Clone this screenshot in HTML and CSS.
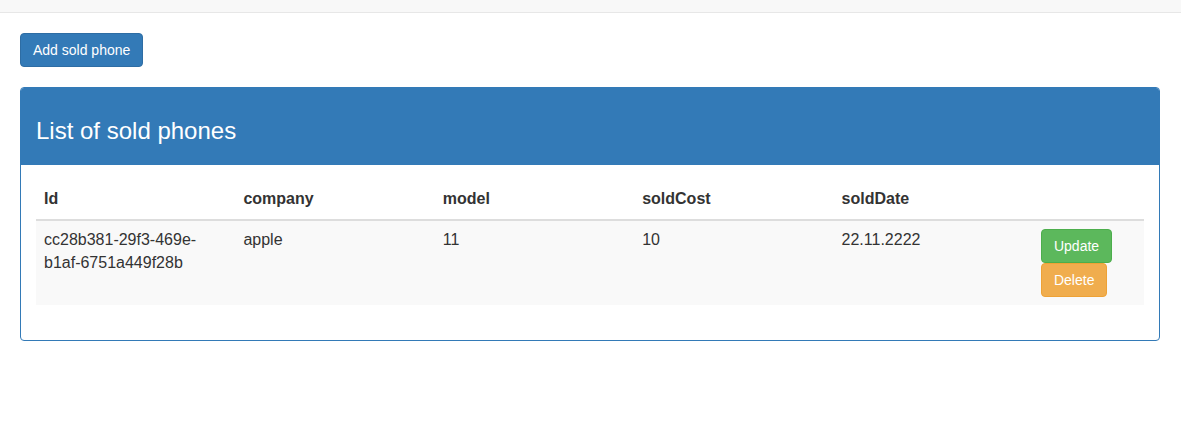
FILE: index.html
```html
<!DOCTYPE html>
<html>
<head>
<meta charset="utf-8">
<link rel="stylesheet" href="styles.css">
</head>
<body>
<nav class="navbar"></nav>
<main class="page">
  <button class="btn btn-primary">Add sold phone</button>
  <section class="panel">
    <div class="panel-heading">
      <h3>List of sold phones</h3>
    </div>
    <div class="panel-body">
      <table class="table">
        <colgroup>
          <col class="c-data"><col class="c-data"><col class="c-data"><col class="c-data"><col class="c-data"><col class="c-actions">
        </colgroup>
        <thead>
          <tr>
            <th>Id</th>
            <th>company</th>
            <th>model</th>
            <th>soldCost</th>
            <th>soldDate</th>
            <th></th>
          </tr>
        </thead>
        <tbody>
          <tr>
            <td>cc28b381-29f3-469e-b1af-6751a449f28b</td>
            <td>apple</td>
            <td>11</td>
            <td>10</td>
            <td>22.11.2222</td>
            <td>
              <div class="actions">
                <button class="btn btn-success">Update</button>
                <button class="btn btn-warning">Delete</button>
              </div>
            </td>
          </tr>
        </tbody>
      </table>
    </div>
  </section>
</main>
</body>
</html>
```
FILE: styles.css
```css
* { box-sizing: border-box; }
html, body { margin: 0; padding: 0; }
body {
  font-family: "Liberation Sans", Arial, Helvetica, sans-serif;
  font-size: 14px;
  line-height: 1.42857143;
  color: #333;
  background: #fff;
}
.navbar {
  height: 13px;
  background: #f8f8f8;
  border-bottom: 1px solid #e7e7e7;
}
.page {
  padding: 20px 21px 0 20px;
}
.btn {
  display: inline-block;
  padding: 6px 12px;
  font-family: inherit;
  font-size: 14px;
  line-height: 1.42857143;
  border: 1px solid transparent;
  border-radius: 4px;
  color: #fff;
  cursor: pointer;
  white-space: nowrap;
}
.btn-primary { background: #337ab7; border-color: #2e6da4; }
.btn-success { background: #5cb85c; border-color: #4cae4c; }
.btn-warning { background: #f0ad4e; border-color: #eea236; }

.panel {
  margin-top: 20px;
  border: 1px solid #337ab7;
  border-radius: 4px;
  background: #fff;
}
.panel-heading {
  background: #337ab7;
  color: #fff;
  padding: 10px 15px;
  border-bottom: 1px solid #337ab7;
  border-radius: 3px 3px 0 0;
}
.panel-heading h3 {
  margin: 20px 0 10px;
  font-size: 24px;
  font-weight: 500;
  line-height: 1.1;
}
.panel-body {
  padding: 15px;
}
.table {
  width: 100%;
  border-collapse: collapse;
  border-spacing: 0;
  table-layout: fixed;
  margin-bottom: 20px;
  font-size: 16px;
}
.c-data { width: 199.4px; }
.c-actions { width: 111px; }
.table th, .table td {
  padding: 8px;
  text-align: left;
  vertical-align: top;
  line-height: 1.42857143;
}
.table th {
  font-weight: bold;
  vertical-align: bottom;
  border-bottom: 2px solid #ddd;
}
.table tbody tr { background: #f9f9f9; }
.table td { border-top: 1px solid #ddd; }
.table tbody tr:first-child td { border-top: 0; }
.actions {
  display: flex;
  flex-direction: column;
  align-items: flex-start;
}
```
